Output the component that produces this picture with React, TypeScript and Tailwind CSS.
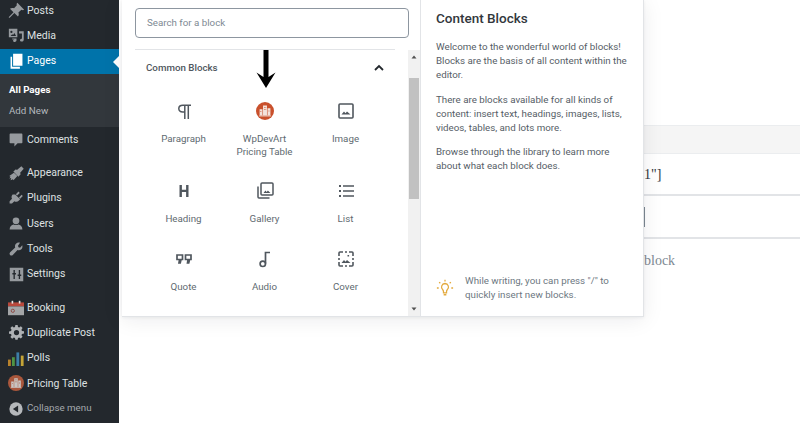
import React from "react";

const gray = "#969a9e";
type IconProps = { c?: string };
const S = ({ children, size = 16, box = 20 }: { children: React.ReactNode; size?: number; box?: number }) => (
  <svg width={size} height={size} viewBox={`0 0 ${box} ${box}`} className="shrink-0">{children}</svg>
);

const PostsI = ({ c = gray }: IconProps) => (
  <S size={17}><path fill={c} d="M11 1l8 8c-.8.8-2.200.7-3.200.1l-3.600 3.300c.8 1.600.6 3.500-.5 4.800L7.500 13 2 18.500H1v-1L6.500 12 2.300 7.900c1.300-1.100 3.200-1.300 4.800-.5l3.300-3.600C9.900 2.900 10.200 1.800 11 1z" /></S>
);
const MediaI = ({ c = gray }: IconProps) => (
  <S size={17}><path fill={c} fillRule="evenodd" d="M1 2h10v10H1zM4 4.500a1.300 1.300 0 100 2.600 1.300 1.300 0 000-2.600zM3 10.500h6.500L7.500 7 6 9.500 5 8.500zM13 5h5.500v10c0 1.400-1.200 2.200-2.400 2.200s-2-.7-2-1.700.9-1.700 2.300-1.700V7.500H13zM5 13.500h5v2.200c0 1.300-1.100 2-2.100 2S6 17 6 16.100c0-.8.700-1.300 1.700-1.500H5z" /></S>
);
const PagesI = ({ c = "#fff" }: IconProps) => (
  <S size={17}><path fill={c} d="M6 1h11v14H6zM3 4.500h1.800V16.300H14V18.500H3z" /></S>
);
const CommentsI = ({ c = gray }: IconProps) => (
  <S><path fill={c} d="M3 2h14c.6 0 1 .4 1 1v10c0 .6-.4 1-1 1h-5l-4 4v-4H3c-.6 0-1-.4-1-1V3c0-.6.4-1 1-1z" /></S>
);
const AppearanceI = ({ c = gray }: IconProps) => (
  <S size={17}><path fill={c} d="M18.500 4.500l-2.800-3-5.200 4.400-1.200-1-3 2.800 6 6 2.800-3-1-1.200zM7 9l-5.500 4 1.500.8L1.500 16l2.300-.6-.8 2.600 2.800-1.300.7 1.300 4.500-5z" /></S>
);
const PluginsI = ({ c = gray }: IconProps) => (
  <S><path fill={c} d="M13.100 2l-3.300 3.300 1.600 1.600 3.300-3.300zM17 6l-3.300 3.300 1.500 1.500L18.500 7.500zM9 5.500l6.200 6.200-1.500 1.500c-1.700 1.700-4 1.900-5.700.8L5 17H2v-3l3-3c-.9-1.700-.7-3.800.8-5.300z" /></S>
);
const UsersI = ({ c = gray }: IconProps) => (
  <S><circle cx="10" cy="6" r="4.200" fill={c} /><path fill={c} d="M2 17c0-4 2.500-6 5-6.500 1.800 1 4.200 1 6 0 2.500.5 5 2.500 5 6.500z" /></S>
);
const ToolsI = ({ c = gray }: IconProps) => (
  <S><path fill={c} d="M17.800 5.200c.6 1.800.2 3.700-1.100 5-1.300 1.300-3.200 1.600-4.800 1L6 17.500c-1 1-2.500 1-3.400.1-.9-.9-.9-2.400.1-3.400l6.300-6c-.6-1.700-.3-3.500 1-4.800 1.300-1.300 3.200-1.700 5-1.100L12.500 5.800l.6 2 2 .6z" /></S>
);
const SettingsI = ({ c = gray }: IconProps) => (
  <S size={15}><path fill={c} fillRule="evenodd" d="M1 1h18v18H1zM6 4v4H4.500v2H6v6h1.800v-6h1.500V8H7.800V4zM13 4v6h-1.500v2H13v4h1.800v-4h1.500v-2h-1.500V4z" /></S>
);
const BookingI = () => (
  <S size={16}>
    <path fill="#b8483c" d="M0 3h20v5H0z" />
    <path fill="#a3a5a7" d="M0 8h20v11H0z" />
    <rect x="4.500" y="1" width="2" height="3.500" fill="#e8e8e8" />
    <rect x="13.500" y="1" width="2" height="3.500" fill="#e8e8e8" />
    <circle cx="6" cy="13.500" r="2" fill="none" stroke="#8b3a33" strokeWidth="1" />
  </S>
);
const GearI = ({ c = "#aeb1b4" }: IconProps) => (
  <S size={15}><path fill={c} fillRule="evenodd" d="M8.500 0h3l.5 2.600 1.600.7L15.800 1.800l2.300 2.300-1.500 2.200.7 1.600 2.700.5v3l-2.700.5-.7 1.600 1.500 2.200-2.300 2.300-2.200-1.500-1.600.7-.5 2.600h-3L8 17.400l-1.600-.7-2.200 1.500L1.900 15.900l1.500-2.200-.7-1.600L0 11.500v-3l2.700-.5.700-1.600L1.900 4.100l2.300-2.300 2.200 1.500L8 2.600zM10 6.500a3.500 3.500 0 100 7 3.500 3.500 0 000-7z" /></S>
);
const PollsI = () => (
  <S size={16}>
    <rect x="0" y="12" width="3.500" height="8" fill="#b8822c" />
    <rect x="5" y="9" width="3.500" height="11" fill="#4f9445" />
    <rect x="10.500" y="3" width="3.500" height="17" fill="#3c7ea8" />
    <rect x="16" y="7" width="3.500" height="13" fill="#c4a437" />
  </S>
);
const PricingLogo = ({ size = 16, bg = "#c9502c", fg = "#f3e3dc" }: { size?: number; bg?: string; fg?: string }) => (
  <S size={size}>
    <circle cx="10" cy="10" r="10" fill={bg} />
    <path fill={fg} d="M7.800 4h4.400v11H7.800zM4 8h3.200v7H4zM12.800 7H16v8h-3.200z" />
    <path fill={bg} d="M9 5.500h.8v1H9zM10.500 5.500h.8v1h-.8zM9 8h.8v1H9zM10.500 8h.8v1h-.8zM5 10h.8v1H5zM14 9.500h.8v1H14z" />
    <path fill={fg} d="M3.500 15h13v1h-13z" />
  </S>
);
const CollapseI = () => (
  <S size={14}><circle cx="10" cy="10" r="9.500" fill="#b5b8bb" /><path fill="#23282d" d="M13 5v10L5.500 10z" /></S>
);

const ink = "#50575e";
const Para = () => <svg width="20" height="20" viewBox="0 0 20 20"><path fill="none" stroke={ink} strokeWidth="1.500" d="M17 4.200H8.800C6.300 4.200 4.800 5.700 4.800 7.600s1.500 3.400 4 3.400h1.700M10.800 4.200V18M14.300 4.200V18" /></svg>;
const ImageI = () => <svg width="20" height="20" viewBox="0 0 20 20"><rect x="3" y="3" width="14" height="14" rx="1" fill="none" stroke={ink} strokeWidth="1.600" /><path fill={ink} d="M5.500 13.500l2.500-3 1.500 1.700 1.500-1.700 3.500 3z" /></svg>;
const HeadingI = () => <svg width="20" height="20" viewBox="0 0 20 20"><path fill={ink} d="M5.500 4h2.400v4.800h4.200V4h2.400v12h-2.400v-5H7.900v5H5.500z" /></svg>;
const GalleryI = () => <svg width="20" height="20" viewBox="0 0 20 20"><rect x="6" y="2" width="12" height="12" rx="1" fill="none" stroke={ink} strokeWidth="1.500" /><path fill="none" stroke={ink} strokeWidth="1.500" d="M3 5.500V16a1 1 0 001 1h10.500" /><path fill={ink} d="M8.500 12l2-2.500 1.200 1.400 1.200-1.400 2.500 2.500z" /></svg>;
const ListI = () => <svg width="20" height="20" viewBox="0 0 20 20"><path fill={ink} d="M3 4h2v2H3zM7 4.200h11v1.600H7zM3 9h2v2H3zM7 9.200h11v1.600H7zM3 14h2v2H3zM7 14.200h11v1.600H7z" /></svg>;
const QuoteI = () => <svg width="20" height="20" viewBox="0 0 20 20"><path fill="none" stroke={ink} strokeWidth="1.700" d="M3 6h5.500v4.500H7l-.8 3.500H5l.6-3.500H3zM11.500 6H17v4.500h-1.500l-.8 3.500h-1.200l.6-3.500h-2.600z" /></svg>;
const AudioI = () => <svg width="20" height="20" viewBox="0 0 20 20"><path fill="none" stroke={ink} strokeWidth="1.700" d="M10.500 14.500V3.500H15" /><circle cx="7.800" cy="14.800" r="2.700" fill="none" stroke={ink} strokeWidth="1.700" /></svg>;
const CoverI = () => <svg width="20" height="20" viewBox="0 0 20 20"><path fill="none" stroke={ink} strokeWidth="1.600" d="M7 3H4a1 1 0 00-1 1v3M13 3h3a1 1 0 011 1v3M3 13v3a1 1 0 001 1h3M17 13v3a1 1 0 01-1 1h-3M3 9v2M17 9v2M9 3h2M9 17h2" /><path fill={ink} d="M5.500 14l2.500-3 1.500 1.700 1.500-1.700 3.500 3zM11.500 6h1.600v1.600h-1.600z" /></svg>;

const Row = ({ icon, label }: { icon: React.ReactNode; label: string }) => (
  <div className="flex h-[25.300px] items-center pl-[5px] text-[10.500px] text-[#dfe1e2]">
    <span className="flex w-[22px] justify-center">{icon}</span>
    <span className="whitespace-nowrap">{label}</span>
  </div>
);

const Block = ({ icon, lines }: { icon: React.ReactNode; lines: string[] }) => (
  <div className="flex flex-col items-center pt-[8px] text-[9.750px] leading-[13px] text-[#606a70]">
    <div className="flex h-[20px] items-center justify-center">{icon}</div>
    <div className="mt-[11px] text-center">{lines.map((l) => <div key={l}>{l}</div>)}</div>
  </div>
);

export default function App() {
  return (
    <div className="relative flex h-[423px] w-[800px] overflow-hidden bg-white font-['Roboto','Noto_Sans',sans-serif]">
      <aside className="h-full w-[119px] shrink-0 bg-[#23282d]">
        <div className="-mt-[2px]">
          <Row icon={<PostsI />} label="Posts" />
          <Row icon={<MediaI />} label="Media" />
          <div className="relative flex h-[25.500px] items-center bg-[#0073aa] pl-[5px] text-[10.500px] text-white">
            <span className="flex w-[22px] justify-center"><PagesI /></span>
            <span>Pages</span>
            <span className="absolute right-0 top-[7px] h-0 w-0 border-y-[6px] border-r-[6px] border-y-transparent border-r-white" />
          </div>
          <div className="flex h-[53px] flex-col bg-[#32373c] pl-[9px] pt-[5px] text-[9.750px] leading-[21px]">
            <div className="font-bold text-white">All Pages</div>
            <div className="text-[#b4b9be]">Add New</div>
          </div>
          <Row icon={<CommentsI />} label="Comments" />
          <div className="h-[8px]" />
          <Row icon={<AppearanceI />} label="Appearance" />
          <Row icon={<PluginsI />} label="Plugins" />
          <Row icon={<UsersI />} label="Users" />
          <Row icon={<ToolsI />} label="Tools" />
          <Row icon={<SettingsI />} label="Settings" />
          <div className="h-[8px]" />
          <Row icon={<BookingI />} label="Booking" />
          <Row icon={<GearI />} label="Duplicate Post" />
          <Row icon={<PollsI />} label="Polls" />
          <Row icon={<PricingLogo bg="#a9573c" fg="#c9c5c2" />} label="Pricing Table" />
          <div className="flex h-[25px] items-center pl-[5px] text-[9.750px] text-[#a4a9ae]">
            <span className="flex w-[22px] justify-center"><CollapseI /></span>
            <span>Collapse menu</span>
          </div>
        </div>
      </aside>

      <main className="min-w-0 flex-1 pl-[525px] pt-[125px]">
        <div className="h-[29px] border-y border-[#ebedef] bg-[#f5f5f5]" />
        <div className="flex h-[42px] items-center border-b-[2px] border-[#e2e4e7] font-['Liberation_Serif',serif] text-[14px] text-[#32373c]">
          <span className="whitespace-nowrap">1"]</span>
        </div>
        <div className="flex h-[43px] items-center border-b-[2px] border-[#e2e4e7]">
          <span className="h-[20px] w-[1px] bg-[#7e8993]" />
        </div>
        <div className="pt-[12px] font-['Liberation_Serif',serif] text-[14px] leading-[20px] text-[#7e8993]">block</div>
      </main>

      <div className="absolute left-[122px] top-0 flex h-[317px] w-[522px] border-b border-r border-[#e2e4e7] bg-white shadow-[0_3px_20px_rgba(25,30,35,0.08),0_1px_3px_rgba(25,30,35,0.06)]">
        <div className="relative w-[299px] border-r border-[#e2e4e7]">
          <div className="pl-[13px] pr-[11px] pt-[8px]">
            <div className="flex h-[30px] items-center rounded-[4px] border border-[#8d96a0] px-[11px] text-[9.750px] text-[#7e8993]">Search for a block</div>
          </div>
          <div className="ml-[13px] mr-[25px] mt-[11px] border-t border-[#e2e4e7] pt-[10px]">
            <div className="flex h-[16px] items-center justify-between pl-[11px] pr-[10px] text-[9.750px] font-medium text-[#50575e]">
              <span>Common Blocks</span>
              <svg width="12" height="12" viewBox="0 0 12 12"><path d="M2 8l4-4 4 4" fill="none" stroke="#23282d" strokeWidth="1.800" /></svg>
            </div>
          </div>
          <div className="grid grid-cols-[81px_81px_81px] pl-[21px] pt-[17px]">
            <div className="h-[80px]"><Block icon={<Para />} lines={["Paragraph"]} /></div>
            <div className="h-[80px]"><Block icon={<PricingLogo size={18} />} lines={["WpDevArt", "Pricing Table"]} /></div>
            <div className="h-[80px]"><Block icon={<ImageI />} lines={["Image"]} /></div>
            <div className="h-[68px]"><Block icon={<HeadingI />} lines={["Heading"]} /></div>
            <div className="h-[68px]"><Block icon={<GalleryI />} lines={["Gallery"]} /></div>
            <div className="h-[68px]"><Block icon={<ListI />} lines={["List"]} /></div>
            <div><Block icon={<QuoteI />} lines={["Quote"]} /></div>
            <div><Block icon={<AudioI />} lines={["Audio"]} /></div>
            <div><Block icon={<CoverI />} lines={["Cover"]} /></div>
          </div>
          <div className="absolute bottom-0 right-0 top-[50px] flex w-[12px] flex-col bg-[#f1f1f1]">
            <svg width="12" height="14" viewBox="0 0 12 14" className="shrink-0"><path d="M3.500 8.500L6 5.500l2.500 3z" fill="#505050" /></svg>
            <div className="mt-[14px] h-[121px] w-[10px] self-center bg-[#c1c1c1]" />
            <svg width="12" height="14" viewBox="0 0 12 14" className="mt-auto shrink-0"><path d="M3.500 5.500L6 8.500l2.500-3z" fill="#505050" /></svg>
          </div>
          <svg width="20" height="38" viewBox="0 0 20 38" className="absolute left-[134px] top-[50px]"><path d="M7.500 0h5v27l7-4.500-9.500 15.500L.5 22.500l7 4.500z" fill="#000" /></svg>
        </div>
        <div className="flex flex-1 flex-col pl-[15px] pr-[12px] text-[9.750px] leading-[14.200px] text-[#555d66]">
          <h2 className="mt-[8px] text-[13.500px] leading-[20px] font-medium text-[#32373c]">Content Blocks</h2>
          <p className="mt-[12px]">Welcome to the wonderful world of blocks! Blocks are the basis of all content within the editor.</p>
          <p className="mt-[10px]">There are blocks available for all kinds of content: insert text, headings, images, lists, videos, tables, and lots more.</p>
          <p className="mt-[9.500px]">Browse through the library to learn more about what each block does.</p>
          <div className="mt-auto mb-[14px] flex items-center">
            <svg width="18" height="18" viewBox="0 0 20 20" className="shrink-0"><g fill="none" stroke="#e3a93c" strokeWidth="1.400"><path d="M10 5a4 4 0 00-2.500 7c.6.6.8 1.200.8 2.200v1.300h3.400v-1.300c0-1 .2-1.600.8-2.200A4 4 0 0010 5zM8.500 17.500h3M10 .8v2M3.500 3.500l1.300 1.300M16.500 3.500l-1.300 1.300M1 10h2M17 10h2" /></g></svg>
            <p className="ml-[11px] text-[#6c7781]">While writing, you can press "/" to quickly insert new blocks.</p>
          </div>
        </div>
      </div>
    </div>
  );
}
